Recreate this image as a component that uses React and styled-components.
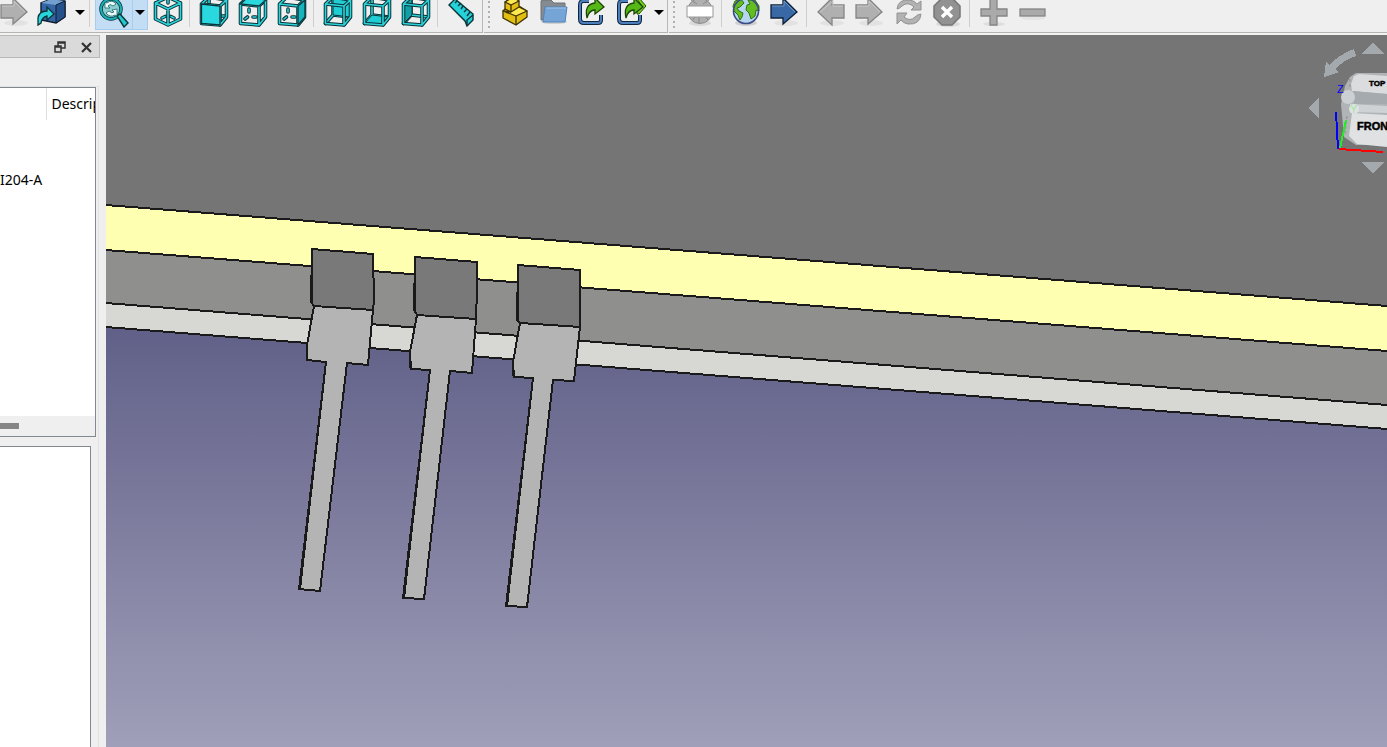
import React from "react";
import styled, { createGlobalStyle } from "styled-components";

const GlobalStyle = createGlobalStyle`
  * { box-sizing: border-box; }
  body { margin: 0; background: #efefef; overflow: hidden; font: 14px/20px "Noto Sans", "Open Sans", sans-serif; color: #000; }
`;

const Window = styled.div`
  display: flex;
  flex-direction: column;
  height: 100vh;
`;

const Toolbar = styled.header`
  display: flex;
  flex: none;
  height: 35px;
  border-bottom: 2px solid #f5f3f0;
  background: #efefef;
`;

const Group = styled.div`
  display: flex;
  height: 33px;
  padding-right: ${(p) => p.$end || 0}px;
  margin-right: ${(p) => (p.$fill ? 0 : 1)}px;
  flex: ${(p) => (p.$fill ? "1 0 auto" : "none")};
  border-right: ${(p) => (p.$fill ? "0" : "1px solid #b8b8b8")};
  border-bottom: 1px solid #b4b4b4;
`;

const Handle = styled.div`
  width: 11px;
  height: 29px;
  background: repeating-linear-gradient(#efefef 0 1px, #b0b0b0 1px 3px, #efefef 3px 5px) 4px 0 / 2px 100% no-repeat;
`;

const Separator = styled.div`
  width: 7px;
  height: 27px;
  background: linear-gradient(#cfcfcf, #cfcfcf) 2px 0 / 1px 100% no-repeat;
`;

const ToolButton = styled.button`
  display: flex;
  justify-content: ${(p) => (p.$cut ? "flex-end" : "center")};
  width: ${(p) => p.$width || 39}px;
  height: 30px;
  padding: 0;
  border: 0;
  background: transparent;
  svg { display: block; flex: none; }
`;

const SplitButton = styled.div`
  display: flex;
  height: 30px;
  margin-left: 1px;
  background: #c2ddf4;
  border: 1px solid #a6cdef;
  border-top: 0;
  button + button { border-left: 1px solid #a6cdef; }
`;

const Main = styled.div`
  display: flex;
  flex: 1;
  min-height: 0;
`;

const Sidebar = styled.aside`
  display: flex;
  flex-direction: column;
  width: 100px;
  margin-right: 6px;
  flex: none;
`;

const DockTitle = styled.div`
  display: flex;
  align-items: center;
  justify-content: flex-end;
  gap: 10px;
  height: 23px;
  padding-right: 5px;
  border: 1px solid #b8b8b8;
  border-left: 0;
  background: #dadada;
`;

const DockButton = styled.button`
  width: 16px;
  height: 16px;
  padding: 0;
  border: 0;
  background: transparent;
  svg { display: block; }
`;

const Panels = styled.div`
  display: flex;
  flex-direction: column;
  flex: 1;
  gap: 9px;
  width: 99px;
  margin-top: 28px;
  border: 1px solid #e2e2e2;
  border-left: 0;
  border-bottom: 0;
`;

const TreePanel = styled.section`
  display: flex;
  flex-direction: column;
  width: 96px;
  height: 350px;
  overflow: hidden;
  background: #fff;
  border: 1px solid #828790;
  border-left: 0;
`;

const Tree = styled.table`
  width: 95px;
  table-layout: fixed;
  border-collapse: collapse;
  th, td { padding: 0; font-weight: 400; text-align: left; white-space: nowrap; overflow: hidden; }
  th { height: 32px; }
  td { height: 24px; }
  th + th { padding-left: 5px; border-left: 1px solid #dedede; }
  th:first-child { width: 46px; }
`;

const ScrollTrack = styled.div`
  margin-top: auto;
  height: 20px;
  padding-top: 7px;
  background: #efefef;
`;

const ScrollThumb = styled.div`
  width: 19px;
  height: 6px;
  background: #858585;
`;

const PropertyPanel = styled.section`
  flex: 1;
  width: 91px;
  background: #fff;
  border: 1px solid #828790;
  border-left: 0;
  border-bottom: 0;
`;

const Viewport = styled.main`
  position: relative;
  flex: 1;
  min-width: 0;
  overflow: hidden;
  background: #757575;
`;

const Scene = styled.svg`
  display: block;
  width: 100%;
  height: 100%;
`;

const NavCube = styled.svg`
  position: absolute;
  top: 5px;
  right: 0;
`;

const Icon = ({ children, w = 30 }) => (
  <svg width={w} height="28" viewBox={`0 0 ${w} 28`} aria-hidden="true">{children}</svg>
);

const INK = "#0b3338";
const TEAL = "#2bd3da";

const Wire = ({ d }) => (
  <g fill="none" strokeLinejoin="round" strokeLinecap="round">
    <path d={d} stroke={INK} strokeWidth="3.6" />
    <path d={d} stroke={TEAL} strokeWidth="1.6" />
  </g>
);

const faces = {
  front: "M2.5 4L21 6V25L2.5 23.5Z",
  top: "M2.5 4L10-3L28 0L21 6Z",
  right: "M21 6L28 0V17L21 25Z",
  rear: "M10-2L27 0V17L10 15Z",
  bottom: "M2.5 23.5L10 15L27 17L21 25Z",
  left: "M2.5 4L11-2V15L2.5 23.5Z",
};

const frontWire = "M2.5 4L21 6V25L2.5 23.5ZM2.5 4L10-3L27.5 0V17L21 25M21 6L27.5 0";
const innerWire = "M10-2V15L27 17M10 15L2.5 23.5";
const marks = "M11 9V12M7 19L9.5 17M15 17H18";

function CubeIcon({ face }) {
  const inner = face === "rear" || face === "bottom" || face === "left";
  return (
    <Icon>
      {face === "front" && <Wire d="M10-2V5M23 16H26" />}
      {(face === "top" || face === "right") && <Wire d={marks} />}
      {inner && (
        <>
          <Wire d={innerWire} />
          <path d={faces[face]} fill={face === "left" ? "#119fa6" : "#20cdd5"} stroke={INK} />
        </>
      )}
      <Wire d={frontWire} />
      {!inner && <path d={faces[face]} fill={face === "right" ? "#18b4bd" : "#2ad8df"} stroke={INK} strokeWidth="1.3" />}
    </Icon>
  );
}

const IsoIcon = () => (
  <Icon>
    <Wire d="M15-2V3M9 18L12 16.5M18 16.5L21 18" />
    <Wire d="M15 25L2.5 19V3L15-3L27.5 3V19ZM2.5 3L15 9L27.5 3M15 9V25" />
  </Icon>
);

const RulerIcon = () => (
  <Icon>
    <path d="M2 5L8-1L26 14V20L20 26L18 21Z" fill="#25d2da" stroke={INK} strokeWidth="1.4" />
    <path d="M8 3L10 1M11 6L14 3M14 9L16 6M17 12L20 9M20 16L23 12M20 26L20 20L26 15" stroke={INK} strokeWidth="1.4" fill="none" />
  </Icon>
);

const arrowShape = {
  right: "M1 5H13V-2L27 12L13 24V18H1Z",
  left: "M28 5H16V-2L2 12L16 25V18H28Z",
};

const ArrowIcon = ({ dir, blue }) => (
  <Icon>
    <ellipse cx="16" cy="23" rx="12" ry="3" fill="#e2e2e2" />
    <path d={arrowShape[dir]} fill={blue ? "#3869a6" : "#b0b0b0"} stroke={blue ? "#0d2037" : "#858585"} strokeWidth="1.3" />
    <path d={dir === "left" ? "M27 6H17V1L4 12" : "M2 6H14V1L25 12"} fill="none" stroke={blue ? "#7599c5" : "#c9c9c9"} />
  </Icon>
);

const LinkBoxIcon = () => (
  <Icon>
    <path d="M4 3L14-1L28 1V17L19 23L4 20Z" fill="#3465a4" stroke="#101c2b" strokeWidth="1.4" />
    <path d="M4 3L14-1L28 1L19 5Z" fill="#729fcf" />
    <path d="M19 5L28 1V17L19 23Z" fill="#24508b" stroke="#101c2b" />
    <path d="M1 25V18Q2 11 10 11V7L17 14L10 20V16Q5 17 4 23Z" fill="#28d7dc" stroke={INK} strokeWidth="1.3" />
  </Icon>
);

const MagnifierIcon = () => (
  <Icon>
    <circle cx="12" cy="9" r="10" fill="#8ccdcf" stroke={INK} strokeWidth="3.5" />
    <circle cx="12" cy="9" r="10" fill="none" stroke="#18afb6" strokeWidth="2" />
    <path d="M18 16L21 14L29 23L25 27Z" fill="#20c9cf" stroke={INK} strokeWidth="1.4" />
    <path d="M6 8V2L8 3Q13-1 17 4L14 6Q11 3 9 6L11 8ZM18 9V16L16 15Q11 18 7 13L10 11Q13 14 15 12L13 10Z" fill="#f3ffff" stroke="#1b6469" strokeWidth="0.8" />
  </Icon>
);

const BrickIcon = () => (
  <Icon>
    <g stroke="#3d3200" strokeWidth="1.3" strokeLinejoin="round">
      <path d="M5 2L13-3L19 1V6L27 11V17L16 25L3 18V11L5 9Z" fill="#e2bd12" />
      <path d="M5 2L11 5L19 1L13-3Z" fill="#fce94f" />
      <path d="M3 11L16 16L27 11L19 7L11 12Z" fill="#fce94f" />
      <path d="M11 5V12M16 16V25M5 9L11 12" fill="none" />
    </g>
  </Icon>
);

const FolderIcon = () => (
  <Icon>
    <ellipse cx="15" cy="22" rx="13" ry="2" fill="#d0d0d0" />
    <path d="M2 20V1Q2 0 4 0H12L15 3H26V20Z" fill="#858b91" stroke="#707070" />
    <path d="M6 7H28L26 22H4Z" fill="#75a4d6" stroke="#4f83bd" />
    <path d="M7 8H27" stroke="#a5c5e7" />
  </Icon>
);

const ShareIcon = ({ many }) => (
  <Icon>
    <path d="M11 1H5Q2 1 2 5V19Q2 23 6 23H20Q23 23 23 20V15" fill="none" stroke="#10243d" strokeWidth="4" />
    <path d="M11 1H5Q2 1 2 5V19Q2 23 6 23H20Q23 23 23 20V15" fill="none" stroke="#4b7fbd" strokeWidth="2" />
    {many && <path d="M20-1L23-1L29 6L22 14H20L20 12L25 6Z" fill="#73d216" stroke="#285007" />}
    <path d="M9 18Q6 4 17 3V-2L26 7L17 14V10Q11 10 9 18Z" fill="#55b817" stroke="#1d4407" strokeWidth="1.3" />
  </Icon>
);

const Land = ({ fill, stroke }) => (
  <path d="M4 1L10-1L13 3L9 7L6 8L8 11L12 13L11 17L9 20L7 15L3 11L2 6ZM17 0L24 0L28 6V11L25 10L24 16L20 19L18 13L15 10L16 5L19 4Z" fill={fill} stroke={stroke} />
);

const GlobeIcon = () => (
  <Icon>
    <ellipse cx="15" cy="23" rx="11" ry="3" fill="#cfcfcf" />
    <circle cx="15" cy="11" r="12.5" fill="#b6d5ee" />
    <Land fill="#63bd20" stroke="#2d7411" />
    <circle cx="15" cy="11" r="12.5" fill="none" stroke="#3d4c86" strokeWidth="1.6" />
  </Icon>
);

const UrlIcon = () => (
  <Icon>
    <ellipse cx="15" cy="23" rx="11" ry="3" fill="#d8d8d8" />
    <circle cx="15" cy="11" r="12.5" fill="#b0b0b0" stroke="#8c8c8c" />
    <path d="M6 0L12 4M18 4L24 0M8 20L10 17M14 17V23M21 17L23 20" stroke="#888" fill="none" />
    <rect x="2" y="6" width="26" height="11" fill="#fff" stroke="#9a9a9a" />
  </Icon>
);

const RefreshIcon = () => (
  <Icon>
    <path d="M3 9Q4-1 16 0Q21 1 23 4L27 1V10H17L20 7Q14 1 8 6Q5 9 3 9ZM27 14Q26 25 14 24Q9 23 7 20L3 24V13H13L10 17Q16 22 21 17Q24 14 27 14Z" fill="#b2b2b2" stroke="#919191" />
  </Icon>
);

const StopIcon = () => (
  <Icon>
    <ellipse cx="15" cy="24" rx="12" ry="3" fill="#d9d9d9" />
    <path d="M9-2H19L27 6V17L19 25H9L1 17V6Z" fill="#929292" stroke="#777" strokeWidth="1.5" />
    <path d="M9 7L19 17M19 7L9 17" stroke="#fff" strokeWidth="3.4" />
  </Icon>
);

const PlusIcon = () => (
  <Icon>
    <ellipse cx="15" cy="24" rx="11" ry="2" fill="#dedede" />
    <path d="M11-2H18V9H28V16H18V25H11V16H2V9H11Z" fill="#aaa" stroke="#858585" strokeWidth="1.3" />
  </Icon>
);

const MinusIcon = () => (
  <Icon>
    <ellipse cx="15" cy="18" rx="12" ry="2" fill="#e4e4e4" />
    <rect x="2" y="9" width="25" height="7" fill="#aaa" stroke="#858585" strokeWidth="1.3" />
  </Icon>
);

const Caret = () => <Icon w={10}><path d="M0 10H10L5 15Z" fill="#000" /></Icon>;

const Tool = ({ label, icon }) => <ToolButton aria-label={label}>{icon}</ToolButton>;

const pins = [
  {
    dark: "312,249 373,254 374,300 373,310 314,306 311,302",
    light: "314,306 373,310 368,365 347,363 320,591 299,589 326,362 307,360 307,345",
    edge: "M326 362L300 589M307 345V360M312 249V302",
  },
  {
    dark: "415,257 477,262 477,290 476,319 417,315 414,310",
    light: "417,315 476,319 472,373 450,371 424,599 403,598 430,370 411,369 410,352",
    edge: "M430 370L404 598M410 352V368M415 258V312",
  },
  {
    dark: "518,265 580,270 580,327 520,323 517,320",
    light: "520,323 580,327 574,381 553,380 527,607 506,606 533,378 514,377 513,362",
    edge: "M533 378L507 606M513 362V376M518 266V322",
  },
];

function ModelScene() {
  return (
    <Scene viewBox="106 35 1281 712" preserveAspectRatio="xMinYMin slice" role="img" aria-label="3D model">
      <defs>
        <linearGradient id="sky" gradientUnits="userSpaceOnUse" x1="0" y1="330" x2="0" y2="747">
          <stop offset="0" stopColor="#616088" />
          <stop offset="1" stopColor="#a09fb9" />
        </linearGradient>
      </defs>
      <g shapeRendering="crispEdges">
        <rect x="106" y="320" width="1281" height="427" fill="url(#sky)" />
        <path d="M106 35H1387V306L106 205Z" fill="#757575" />
        <path d="M106 205L1387 306V351L106 250Z" fill="#ffffb2" />
        <path d="M106 250L1387 351V405L106 303Z" fill="#8f8f8d" />
        <path d="M106 303L1387 405V429L106 327Z" fill="#d7d8d3" />
        <path d="M106 205L1387 306M106 250L1387 351M106 303L1387 405M106 327L1387 429" stroke="#1a1a1a" strokeWidth="2" />
        {pins.map((pin) => (
          <g key={pin.dark} stroke="#1a1a1a" strokeWidth="2" strokeLinejoin="round">
            <polygon points={pin.light} fill="#b4b4b4" />
            <polygon points={pin.dark} fill="#797979" />
            <path d={pin.edge} fill="none" />
          </g>
        ))}
      </g>
    </Scene>
  );
}

function Navigation() {
  return (
    <NavCube width="82" height="140" viewBox="1305 40 82 140" role="img" aria-label="Navigation cube">
      <g fill="#a4a9ad" shapeRendering="crispEdges">
        <path d="M1373 42L1384 54H1362ZM1373 174L1384 162H1362ZM1308 108L1319 97V119Z" />
        <path d="M1324 77L1326 61L1329 65Q1340 54 1354 49L1356 56Q1344 60 1335 69L1339 72Z" />
      </g>
      <path d="M1341 104L1345 86L1350 77L1356 73H1387V145L1356 145L1344 137Z" fill="#b0b4b7" />
      <path d="M1352 91L1351 84L1354 76L1359 74L1387 76V94Z" fill="#dadcde" />
      <path d="M1353 91L1387 94V104L1354 104Z" fill="#a5aaae" />
      <path d="M1350 104L1387 106V113L1350 112Z" fill="#cfd2d4" />
      <path d="M1352 113L1387 115V147L1357 144L1349 136Z" fill="#dfe1e3" />
      <circle cx="1348" cy="97" r="7" fill="#cdd0d2" />
      <circle cx="1354" cy="109" r="5" fill="#dfe1e3" />
      <path d="M1350 79L1350 89M1347 116L1345 135" stroke="#8d9194" strokeDasharray="3 2" fill="none" />
      <g fontFamily="Liberation Sans, sans-serif" fontSize="11">
        <text x="1369" y="86" fontSize="8" fontWeight="700" stroke="#000" strokeWidth="0.5">TOP</text>
        <text x="1357" y="130" fontWeight="700" stroke="#000" strokeWidth="0.5">FRONT</text>
        <text x="1337" y="93" fill="#00f">Z</text>
        <text x="1350" y="113" fill="#9be99b">Y</text>
      </g>
      <g fill="none" strokeWidth="2" shapeRendering="crispEdges">
        <path d="M1346 120L1340 148" stroke="#2e2" />
        <path d="M1336 112L1338 149" stroke="#00f" />
        <path d="M1339 149L1383 152" stroke="#f00" />
      </g>
    </NavCube>
  );
}

export default function App() {
  return (
    <>
      <GlobalStyle />
      <Window>
        <Toolbar>
          <Group $end={1}>
            <ToolButton $width={30} $cut aria-label="Forward"><ArrowIcon dir="right" /></ToolButton>
            <ToolButton $width={43} aria-label="Go to linked object"><LinkBoxIcon /></ToolButton>
            <ToolButton $width={14} aria-label="Link options"><Caret /></ToolButton>
            <Separator />
            <SplitButton>
              <ToolButton $width={36} aria-label="Fit all"><MagnifierIcon /></ToolButton>
              <ToolButton $width={15} aria-label="Zoom options"><Caret /></ToolButton>
            </SplitButton>
            <Tool label="Isometric" icon={<IsoIcon />} />
            <Separator />
            <Tool label="Front" icon={<CubeIcon face="front" />} />
            <Tool label="Top" icon={<CubeIcon face="top" />} />
            <Tool label="Right" icon={<CubeIcon face="right" />} />
            <Separator />
            <Tool label="Rear" icon={<CubeIcon face="rear" />} />
            <Tool label="Bottom" icon={<CubeIcon face="bottom" />} />
            <Tool label="Left" icon={<CubeIcon face="left" />} />
            <Separator />
            <Tool label="Measure" icon={<RulerIcon />} />
          </Group>
          <Group $end={1}>
            <Handle />
            <Tool label="Create part" icon={<BrickIcon />} />
            <Tool label="Create group" icon={<FolderIcon />} />
            <Tool label="Make link" icon={<ShareIcon />} />
            <Tool label="Make sub-link" icon={<ShareIcon many />} />
            <ToolButton $width={15} aria-label="Link actions"><Caret /></ToolButton>
          </Group>
          <Group $fill>
            <Handle />
            <Tool label="Set URL" icon={<UrlIcon />} />
            <Separator />
            <Tool label="Open website" icon={<GlobeIcon />} />
            <Tool label="Start page" icon={<ArrowIcon dir="right" blue />} />
            <Separator />
            <Tool label="Previous page" icon={<ArrowIcon dir="left" />} />
            <Tool label="Next page" icon={<ArrowIcon dir="right" />} />
            <Tool label="Refresh" icon={<RefreshIcon />} />
            <Tool label="Stop" icon={<StopIcon />} />
            <Separator />
            <Tool label="Zoom in" icon={<PlusIcon />} />
            <Tool label="Zoom out" icon={<MinusIcon />} />
          </Group>
        </Toolbar>
        <Main>
          <Sidebar>
            <DockTitle>
              <DockButton aria-label="Float panel">
                <svg width="16" height="16" fill="none" stroke="#333" strokeWidth="1.5">
                  <path d="M3 7H9V13H3ZM3 8H9M6 7V3H13V9H9M6 4H13" />
                </svg>
              </DockButton>
              <DockButton aria-label="Close panel">
                <svg width="16" height="16" stroke="#333" strokeWidth="2.2">
                  <path d="M4 4L13 13M13 4L4 13" />
                </svg>
              </DockButton>
            </DockTitle>
            <Panels>
              <TreePanel>
                <Tree>
                  <thead><tr><th aria-label="Labels" /><th>Description</th></tr></thead>
                  <tbody>
                    <tr><td /><td /></tr>
                    <tr><td /><td /></tr>
                    <tr><td>I204-A</td><td /></tr>
                  </tbody>
                </Tree>
                <ScrollTrack><ScrollThumb /></ScrollTrack>
              </TreePanel>
              <PropertyPanel aria-label="Properties" />
            </Panels>
          </Sidebar>
          <Viewport>
            <ModelScene />
            <Navigation />
          </Viewport>
        </Main>
      </Window>
    </>
  );
}
